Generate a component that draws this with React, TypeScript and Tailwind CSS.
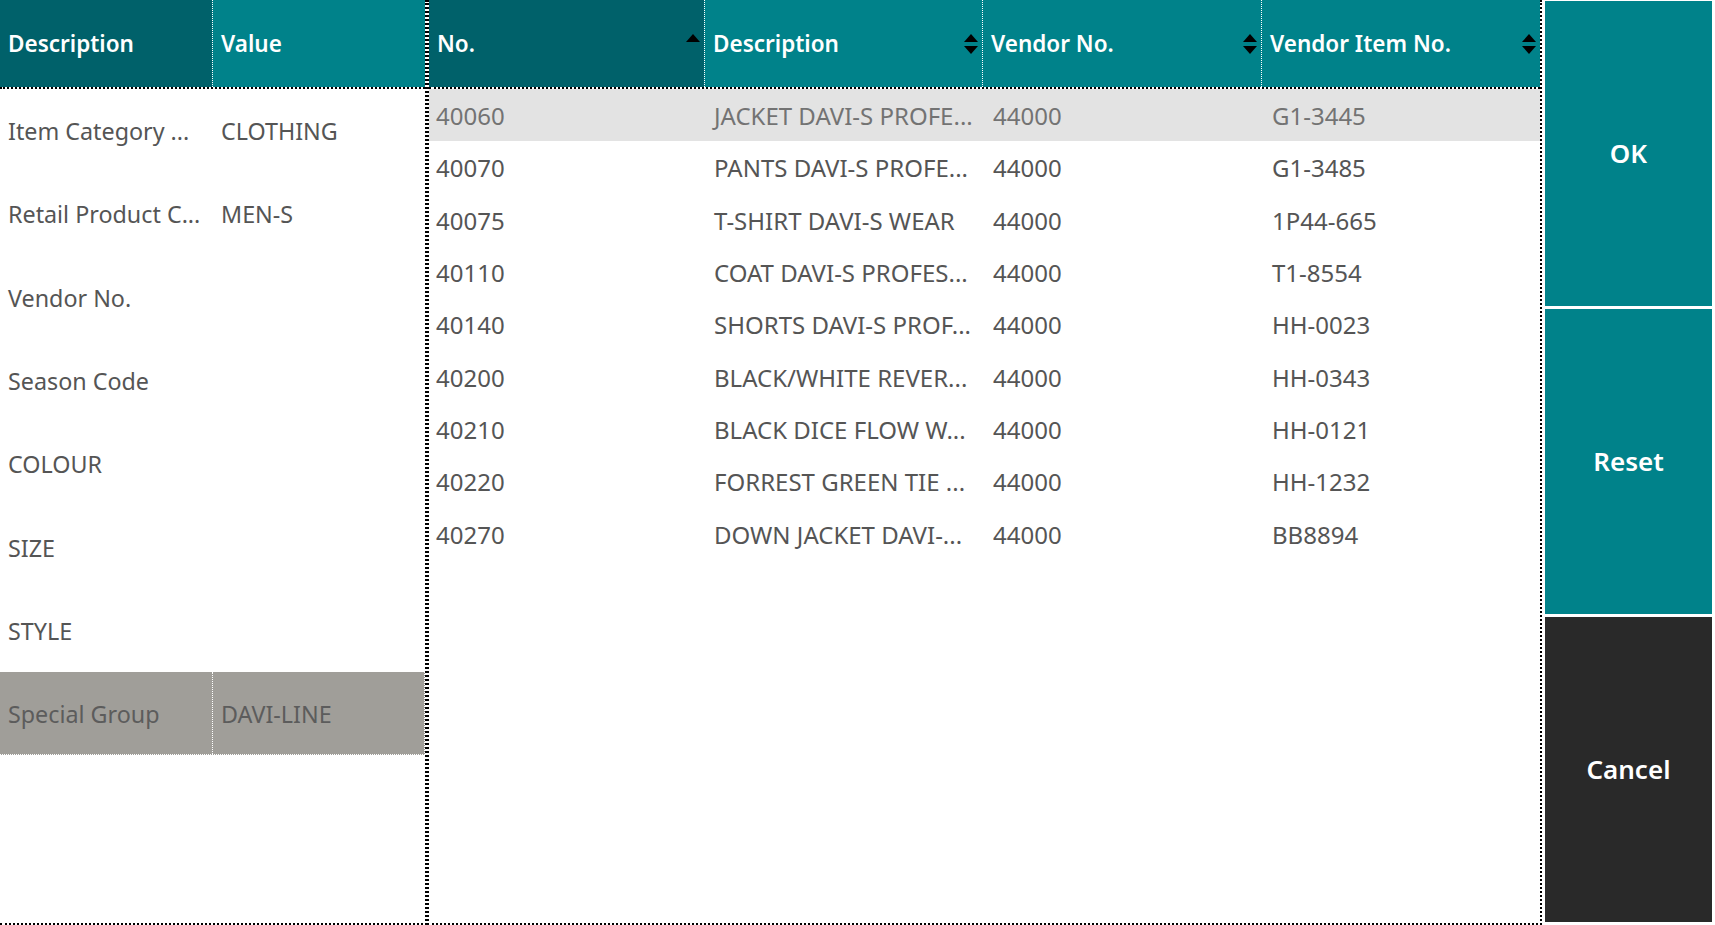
import React from 'react'

type Item = { no: string; description: string; vendorNo: string; vendorItemNo: string }

const FILTERS = [
  { label: 'Item Category ...', value: 'CLOTHING' },
  { label: 'Retail Product C...', value: 'MEN-S' },
  { label: 'Vendor No.', value: '' },
  { label: 'Season Code', value: '' },
  { label: 'COLOUR', value: '' },
  { label: 'SIZE', value: '' },
  { label: 'STYLE', value: '' },
  { label: 'Special Group', value: 'DAVI-LINE' },
]

const ITEMS: Item[] = [
  { no: '40060', description: 'JACKET DAVI-S PROFE...', vendorNo: '44000', vendorItemNo: 'G1-3445' },
  { no: '40070', description: 'PANTS DAVI-S PROFE...', vendorNo: '44000', vendorItemNo: 'G1-3485' },
  { no: '40075', description: 'T-SHIRT DAVI-S WEAR', vendorNo: '44000', vendorItemNo: '1P44-665' },
  { no: '40110', description: 'COAT DAVI-S PROFES...', vendorNo: '44000', vendorItemNo: 'T1-8554' },
  { no: '40140', description: 'SHORTS DAVI-S PROF...', vendorNo: '44000', vendorItemNo: 'HH-0023' },
  { no: '40200', description: 'BLACK/WHITE REVER...', vendorNo: '44000', vendorItemNo: 'HH-0343' },
  { no: '40210', description: 'BLACK DICE FLOW W...', vendorNo: '44000', vendorItemNo: 'HH-0121' },
  { no: '40220', description: 'FORREST GREEN TIE ...', vendorNo: '44000', vendorItemNo: 'HH-1232' },
  { no: '40270', description: 'DOWN JACKET DAVI-...', vendorNo: '44000', vendorItemNo: 'BB8894' },
]

function SortIcon({ both }: { both?: boolean }) {
  return (
    <svg width="14" height="20" viewBox="0 0 14 20" className="flex-shrink-0">
      <polygon points="0,8 7,0 14,8" fill="#000" />
      {both && <polygon points="0,12 14,12 7,20" fill="#000" />}
    </svg>
  )
}

// dotted black/white line under the grid headers
function HeaderRule() {
  return <div className="h-0 border-t-2 border-dotted border-black bg-white" />
}

function FilterGrid() {
  return (
    <div className="w-[427px] h-full flex flex-col border-r-2 border-b-2 border-dotted border-black bg-white">
      {/* Header */}
      <div className="flex h-[87px] flex-shrink-0 text-white font-semibold text-[22.5px]">
        <div className="w-[212px] bg-[#00616a] flex items-center pl-2">Description</div>
        <div className="flex-1 bg-[#00828a] border-l border-dotted border-white flex items-center pl-2">Value</div>
      </div>
      <HeaderRule />

      {/* Rows */}
      {FILTERS.map((f, i) => {
        const selected = i === FILTERS.length - 1
        return (
          <div
            key={f.label}
            className={`flex h-[83.3px] text-[23.3px] ${selected
              ? 'bg-[#a09e99] text-[#5c5c5c] border-b border-r border-dotted border-white'
              : 'text-[#555555]'
            }`}
          >
            <div className="w-[212px] flex items-center pl-2 pt-[2px] whitespace-nowrap overflow-hidden">{f.label}</div>
            <div className={`flex-1 flex items-center pl-2 pt-[2px] whitespace-nowrap ${selected ? 'border-l border-dotted border-white' : 'border-l border-transparent'}`}>
              {f.value}
            </div>
          </div>
        )
      })}
    </div>
  )
}

const COLUMNS = [
  { title: 'No.', width: 'w-[275px]', bg: 'bg-[#00616a]', both: false },
  { title: 'Description', width: 'w-[278px]', bg: 'bg-[#00828a]', both: true },
  { title: 'Vendor No.', width: 'w-[279px]', bg: 'bg-[#00828a]', both: true },
  { title: 'Vendor Item No.', width: 'flex-1', bg: 'bg-[#00828a]', both: true },
]

function ItemGrid() {
  return (
    <div className="flex-1 h-full flex flex-col border-l-2 border-r-2 border-b-2 border-dotted border-black bg-white">
      {/* Header */}
      <div className="flex h-[87px] flex-shrink-0 text-white font-semibold text-[22.5px]">
        {COLUMNS.map((c, i) => (
          <div
            key={c.title}
            className={`${c.width} ${c.bg} flex items-center justify-between pl-2 pr-1 ${i > 0 ? 'border-l border-dotted border-white' : ''}`}
          >
            <span className="whitespace-nowrap">{c.title}</span>
            <SortIcon both={c.both} />
          </div>
        ))}
      </div>
      <HeaderRule />

      {/* Rows */}
      {ITEMS.map((it, idx) => (
        <div
          key={it.no}
          className={`flex h-[52.3px] text-[24px] ${idx === 0 ? 'bg-[#e3e3e3] text-[#737373]' : 'text-[#555555]'}`}
        >
          <div className="w-[275px] flex items-center pl-[7px] pt-[2px] whitespace-nowrap">{it.no}</div>
          <div className="w-[278px] flex items-center pl-[9px] pt-[2px] whitespace-nowrap ml-px">{it.description}</div>
          <div className="w-[279px] flex items-center pl-[9px] pt-[2px] whitespace-nowrap ml-px">{it.vendorNo}</div>
          <div className="flex-1 flex items-center pl-[8px] pt-[2px] whitespace-nowrap ml-px">{it.vendorItemNo}</div>
        </div>
      ))}
    </div>
  )
}

export default function App() {
  return (
    <div className="w-[1715px] h-[925px] flex bg-white overflow-hidden" style={{ fontFamily: '"Noto Sans", "Open Sans", sans-serif' }}>
      <FilterGrid />
      <ItemGrid />

      {/* Action buttons */}
      <div className="w-[173px] h-full flex flex-col gap-[3px] pt-[1px] pb-[3px] pl-[3px] pr-[3px] flex-shrink-0">
        <button className="flex-1 bg-[#00828a] text-white text-[26px] font-semibold">OK</button>
        <button className="flex-1 bg-[#00828a] text-white text-[26px] font-semibold">Reset</button>
        <button className="flex-1 bg-[#292929] text-white text-[26px] font-semibold">Cancel</button>
      </div>
    </div>
  )
}
